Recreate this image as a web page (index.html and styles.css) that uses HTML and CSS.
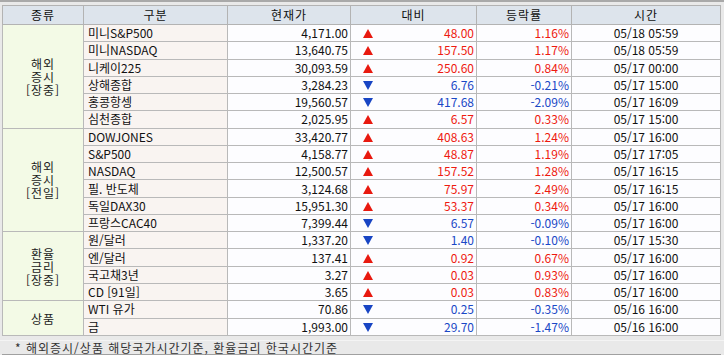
FILE: index.html
```html
<!DOCTYPE html>
<html lang="ko">
<head>
  <meta charset="UTF-8">
  <title>해외지수</title>
  <link rel="stylesheet" href="styles.css">
</head>
<body>
  <div class="topline"></div>
  <div class="wrap">
    <table class="quotes">
      <colgroup>
        <col class="c-kind"><col class="c-name"><col class="c-price"><col class="c-diff"><col class="c-rate"><col class="c-time">
      </colgroup>
      <thead>
        <tr><th>종류</th><th>구분</th><th>현재가</th><th>대비</th><th>등락률</th><th>시간</th></tr>
      </thead>
      <tbody id="rows"></tbody>
    </table>
  </div>
  <div class="note">* 해외증시/상품 해당국가시간기준, 환율금리 한국시간기준</div>
  <div class="next">
    <span class="n1"></span><span class="n2"></span><span class="n3"></span><span class="n4"></span>
  </div>

  <script>
    // 종류별 그룹과 시세 데이터
    const groups = [
      { kind: '해외<br>증시<br>[장중]', rows: [
        ['미니S&amp;P500', '4,171.00', 'up', '48.00', '1.16%', '05/18 05:59'],
        ['미니NASDAQ', '13,640.75', 'up', '157.50', '1.17%', '05/18 05:59'],
        ['니케이225', '30,093.59', 'up', '250.60', '0.84%', '05/17 00:00'],
        ['상해종합', '3,284.23', 'dn', '6.76', '-0.21%', '05/17 15:00'],
        ['홍콩항셍', '19,560.57', 'dn', '417.68', '-2.09%', '05/17 16:09'],
        ['심천종합', '2,025.95', 'up', '6.57', '0.33%', '05/17 15:00']
      ]},
      { kind: '해외<br>증시<br>[전일]', rows: [
        ['DOWJONES', '33,420.77', 'up', '408.63', '1.24%', '05/17 16:00'],
        ['S&amp;P500', '4,158.77', 'up', '48.87', '1.19%', '05/17 17:05'],
        ['NASDAQ', '12,500.57', 'up', '157.52', '1.28%', '05/17 16:15'],
        ['필. 반도체', '3,124.68', 'up', '75.97', '2.49%', '05/17 16:15'],
        ['독일DAX30', '15,951.30', 'up', '53.37', '0.34%', '05/17 16:00'],
        ['프랑스CAC40', '7,399.44', 'dn', '6.57', '-0.09%', '05/17 16:00']
      ]},
      { kind: '환율<br>금리<br>[장중]', rows: [
        ['원/달러', '1,337.20', 'dn', '1.40', '-0.10%', '05/17 15:30'],
        ['엔/달러', '137.41', 'up', '0.92', '0.67%', '05/17 16:00'],
        ['국고채3년', '3.27', 'up', '0.03', '0.93%', '05/17 16:00'],
        ['CD [91일]', '3.65', 'up', '0.03', '0.83%', '05/17 16:00']
      ]},
      { kind: '상품', rows: [
        ['WTI 유가', '70.86', 'dn', '0.25', '-0.35%', '05/16 16:00'],
        ['금', '1,993.00', 'dn', '29.70', '-1.47%', '05/16 16:00']
      ]}
    ];

    const arrows = {
      up: '<svg class="arr" width="10" height="9" viewBox="0 0 10 9"><path d="M5 0L10 9H0Z" fill="#e8190f"/></svg>',
      dn: '<svg class="arr" width="10" height="9" viewBox="0 0 10 9"><path d="M0 0H10L5 9Z" fill="#1845c4"/></svg>'
    };

    let html = '';
    groups.forEach(g => {
      g.rows.forEach((r, i) => {
        html += '<tr>';
        if (i === 0) html += `<td class="kind" rowspan="${g.rows.length}">${g.kind}</td>`;
        html += `<td class="name">${r[0]}</td>`;
        html += `<td class="num">${r[1]}</td>`;
        html += `<td class="num ${r[2]}">${arrows[r[2]]}${r[3]}</td>`;
        html += `<td class="num ${r[2]}">${r[4]}</td>`;
        html += `<td class="time">${r[5]}</td>`;
        html += '</tr>';
      });
    });
    document.getElementById('rows').innerHTML = html;
  </script>
</body>
</html>
```

FILE: styles.css
```css
body {
  margin: 0;
  background: #e9e9e9;
  font-family: "Noto Sans CJK KR", "DejaVu Sans", sans-serif;
  font-size: 12px;
  color: #111;
}
.topline {
  height: 2px;
  background: #a9a9a9;
}
.wrap {
  padding: 3px 2px 0 2px;
}
.quotes {
  width: 718px;
  table-layout: fixed;
  border-collapse: collapse;
  border: 1px solid #8a8a8a;
}
.c-kind { width: 81px; }
.c-name { width: 144px; }
.c-price { width: 123px; }
.c-diff { width: 126px; }
.c-rate { width: 95px; }
.c-time { width: 149px; }
.quotes th {
  height: 18px;
  padding: 0;
  background: #dde4ec;
  border: 1px solid #b3b3b3;
  font-weight: normal;
  line-height: 18px;
  letter-spacing: 1px;
}
.quotes td {
  height: 16.28px;
  padding: 0 2px;
  border: 1px solid #b9b9b9;
  background: #fdfdff;
  line-height: 16px;
  white-space: nowrap;
  overflow: hidden;
}
.quotes td.kind {
  background: #f3fae6;
  text-align: center;
  line-height: 13px;
  color: #222;
  letter-spacing: 1px;
}
.quotes td.name {
  background: #f9f4f1;
  padding-left: 4px;
}
.num {
  text-align: right;
}
.time {
  text-align: center;
}
.up {
  color: #ee1a10;
}
.dn {
  color: #1a48c6;
}
.arr {
  float: left;
  margin: 4px 0 0 10px;
}
.note {
  margin-top: 4px;
  height: 13px;
  padding-left: 15px;
  line-height: 13px;
  color: #333;
  letter-spacing: 1px;
  border-top: 1px solid #f4f4f4;
}
.next {
  display: flex;
  margin: 0 3px 0 2px;
  height: 3px;
  border-top: 1px solid #a0a0a0;
  background: #f0f0f0;
}
.next span {
  border-left: 1px solid #c0c0c0;
}
.n1 { width: 97px; border-left: none !important; }
.n2 { width: 360px; }
.n3 { width: 130px; }
.n4 { flex: 1; }
```
